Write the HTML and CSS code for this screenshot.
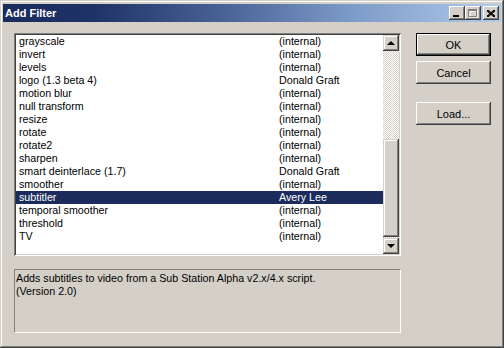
FILE: index.html
```html
<!DOCTYPE html>
<html lang="en">
<head>
  <meta charset="UTF-8" />
  <title>Add Filter</title>
  <link rel="stylesheet" href="styles.css">
</head>
<body>
  <div class="window">
    <div class="titlebar">
      <span class="title">Add Filter</span>
      <div class="caption-buttons">
        <button class="cap">
          <svg width="8" height="7" viewBox="0 0 8 7"><rect x="0" y="5" width="6" height="2" fill="#000"/></svg>
        </button>
        <button class="cap">
          <svg width="10" height="9" viewBox="0 0 10 9">
            <path d="M1 1h8v7H1z M1 1h8v1" fill="none" stroke="#fff" transform="translate(1 1)"/>
            <path d="M0.5 0.5h8v7h-8z" fill="none" stroke="#808080"/>
            <rect x="0" y="0" width="9" height="2" fill="#808080"/>
          </svg>
        </button>
        <button class="cap close">
          <svg width="8" height="7" viewBox="0 0 8 7"><path d="M0 0L8 7M1 0L8 6M0 1L7 7M8 0L0 7M7 0L0 6M8 1L1 7" stroke="#000" stroke-width="1" fill="none"/></svg>
        </button>
      </div>
    </div>

    <div class="content">
      <div class="main">
        <div class="listbox">
          <div class="rows">
            <div class="row"><span class="name">grayscale</span><span>(internal)</span></div>
            <div class="row"><span class="name">invert</span><span>(internal)</span></div>
            <div class="row"><span class="name">levels</span><span>(internal)</span></div>
            <div class="row"><span class="name">logo (1.3 beta 4)</span><span>Donald Graft</span></div>
            <div class="row"><span class="name">motion blur</span><span>(internal)</span></div>
            <div class="row"><span class="name">null transform</span><span>(internal)</span></div>
            <div class="row"><span class="name">resize</span><span>(internal)</span></div>
            <div class="row"><span class="name">rotate</span><span>(internal)</span></div>
            <div class="row"><span class="name">rotate2</span><span>(internal)</span></div>
            <div class="row"><span class="name">sharpen</span><span>(internal)</span></div>
            <div class="row"><span class="name">smart deinterlace (1.7)</span><span>Donald Graft</span></div>
            <div class="row"><span class="name">smoother</span><span>(internal)</span></div>
            <div class="row selected"><span class="name">subtitler</span><span>Avery Lee</span></div>
            <div class="row"><span class="name">temporal smoother</span><span>(internal)</span></div>
            <div class="row"><span class="name">threshold</span><span>(internal)</span></div>
            <div class="row"><span class="name">TV</span><span>(internal)</span></div>
          </div>
          <div class="scrollbar">
            <div class="sb-btn"><span class="arrow up"></span></div>
            <div class="track upper"></div>
            <div class="thumb"></div>
            <div class="track lower"></div>
            <div class="sb-btn"><span class="arrow down"></span></div>
          </div>
        </div>

        <div class="desc">
          Adds subtitles to video from a Sub Station Alpha v2.x/4.x script.<br>
          (Version 2.0)
        </div>
      </div>

      <div class="side">
        <button class="btn default">OK</button>
        <button class="btn">Cancel</button>
        <button class="btn load">Load...</button>
      </div>
    </div>
  </div>
</body>
</html>
```

FILE: styles.css
```css
body {
  margin: 0;
  background: #d4d0c8;
  font-family: 'Liberation Sans', Arial, sans-serif;
  font-size: 10.7px;
  color: #000;
}

.window {
  width: 504px;
  height: 348px;
  box-sizing: border-box;
  padding: 3px;
  background: #d4d0c8;
  box-shadow: inset -1px -1px #404040, inset 1px 1px #d4d0c8,
              inset -2px -2px #808080, inset 2px 2px #fff;
  display: flex;
  flex-direction: column;
}

.titlebar {
  height: 18px;
  margin-top: 1px;
  background: linear-gradient(to right, #1a2c5e 0%, #1f3266 18%, #4a6498 45%, #7d9bc8 70%, #b2cbec 100%);
  display: flex;
  align-items: center;
  justify-content: space-between;
  padding: 0 2px 0 2px;
}

.title {
  color: #fff;
  font-weight: bold;
  font-size: 11px;
}

.caption-buttons {
  display: flex;
  align-items: center;
}

.cap {
  width: 16px;
  height: 14px;
  padding: 0;
  border: none;
  background: #d4d0c8;
  box-shadow: inset -1px -1px #404040, inset 1px 1px #fff,
              inset -2px -2px #808080, inset 2px 2px #d4d0c8;
  display: flex;
  align-items: center;
  justify-content: center;
}

.cap svg { display: block; }
.cap.close { margin-left: 2px; }

.content {
  flex: 1;
  display: flex;
  padding: 11px 0 0 11px;
}

.main {
  width: 387px;
  display: flex;
  flex-direction: column;
  gap: 13px;
}

.listbox {
  height: 223px;
  box-sizing: border-box;
  padding: 2px;
  background: #fff;
  box-shadow: inset 1px 1px #808080, inset -1px -1px #fff,
              inset 2px 2px #404040, inset -2px -2px #d4d0c8;
  display: flex;
}

.rows {
  flex: 1;
}

.row {
  height: 13px;
  line-height: 13px;
  padding-left: 3px;
  white-space: nowrap;
  display: flex;
}

.row .name {
  width: 260px;
}

.row.selected {
  background: #1a2b5c;
  color: #fff;
}

.scrollbar {
  width: 16px;
  display: flex;
  flex-direction: column;
}

.sb-btn,
.thumb {
  background: #d4d0c8;
  box-shadow: inset -1px -1px #404040, inset 1px 1px #d4d0c8,
              inset -2px -2px #808080, inset 2px 2px #fff;
}

.sb-btn {
  height: 16px;
  display: flex;
  align-items: center;
  justify-content: center;
}

.arrow {
  width: 0;
  height: 0;
  border-left: 4px solid transparent;
  border-right: 4px solid transparent;
}

.arrow.up { border-bottom: 4px solid #000; margin-top: -1px; }
.arrow.down { border-top: 4px solid #000; }

.track {
  background: repeating-conic-gradient(#fff 0 25%, #d4d0c8 0 50%) 0 0 / 2px 2px;
}

.track.upper { height: 88px; }
.thumb { height: 98px; }
.track.lower { flex: 1; }

.desc {
  height: 64px;
  box-sizing: border-box;
  border: 1px solid;
  border-color: #808080 #fff #fff #808080;
  padding: 2px 1px;
  line-height: 13px;
}

.side {
  margin-left: 15px;
  display: flex;
  flex-direction: column;
  gap: 5px;
}

.btn {
  width: 75px;
  height: 23px;
  box-sizing: border-box;
  padding: 0;
  border: none;
  background: #d4d0c8;
  font-family: 'Liberation Sans', Arial, sans-serif;
  font-size: 11px;
  color: #000;
  box-shadow: inset -1px -1px #404040, inset 1px 1px #fff,
              inset -2px -2px #808080, inset 2px 2px #d4d0c8;
}

.btn.default {
  box-shadow: inset 0 0 0 1px #000,
              inset -2px -2px #404040, inset 2px 2px #fff,
              inset -3px -3px #808080;
}

.btn.load {
  margin-top: 13px;
}
```
